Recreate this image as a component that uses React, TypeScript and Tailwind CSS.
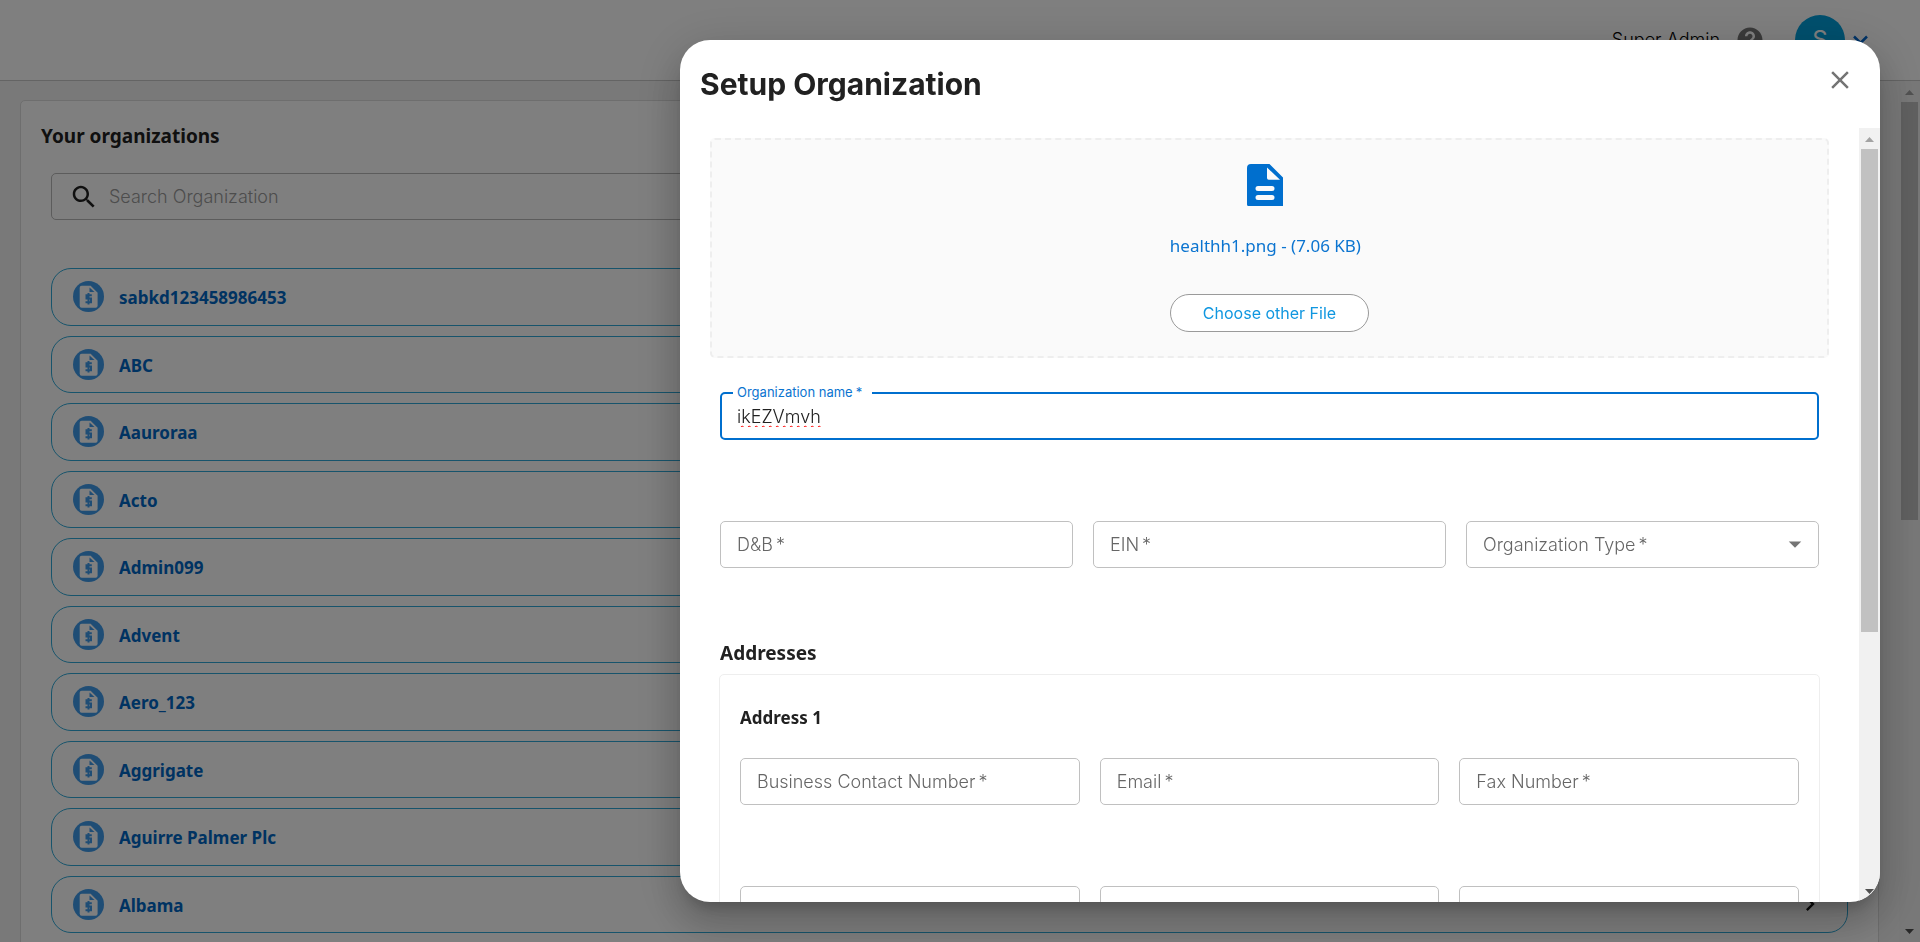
import React from "react";

const organizations = [
  "sabkd123458986453",
  "ABC",
  "Aauroraa",
  "Acto",
  "Admin099",
  "Advent",
  "Aero_123",
  "Aggrigate",
  "Aguirre Palmer Plc",
  "Albama",
];

const heading = "font-['Segoe_UI','Noto_Sans',sans-serif]";

function OrgIcon() {
  return (
    <svg viewBox="0 0 31 31" className="size-[31px] shrink-0" aria-hidden="true">
      <circle cx="15.5" cy="15.5" r="15.5" fill="#3f9bea" />
      <path fill="#fff" d="M8.7 4.800h8.900l7 7v13a2 2 0 0 1-2 2H8.7a2 2 0 0 1-2-2V6.800a2 2 0 0 1 2-2z" />
      <path d="M16.500 6.500v4.500h5z" fill="#3f9bea" />
      <path
        d="M18.800 14.300h-5.300v3.300h4.500v3.600h-5.500M15.500 12v11.500"
        stroke="#3f9bea"
        strokeWidth="2"
        fill="none"
      />
    </svg>
  );
}

function Arrow({ up, dark }: { up?: boolean; dark?: boolean }) {
  return (
    <svg viewBox="0 0 21 21" className="size-[21px] shrink-0" aria-hidden="true">
      <path d={up ? "M6 14h9l-4.500-5z" : "M6 8h9l-4.500 5z"} fill={dark ? "#505050" : "#a3a3a3"} />
    </svg>
  );
}

function Field({ id, label, name }: { id: string; label?: string; name?: string }) {
  return (
    <div className="relative flex-1">
      <input
        id={id}
        aria-label={name}
        placeholder=" "
        className="peer block h-[47px] w-full rounded-[5px] border border-[#c0c0c0] bg-white px-4 text-lg font-light text-[#212121] outline-none"
      />
      {label && (
        <label
          htmlFor={id}
          className="pointer-events-none absolute inset-y-0 left-[17px] flex items-center gap-[3px] text-lg font-light text-[#666] peer-focus:hidden peer-[:not(:placeholder-shown)]:hidden"
        >
          {label}
          <span>*</span>
        </label>
      )}
    </div>
  );
}

export default function App() {
  return (
    <div className="flex h-screen flex-col overflow-hidden bg-white font-['Inter',sans-serif]">
      <header className="flex h-[81px] shrink-0 items-center justify-end border-b border-[#c8c8c8] pr-[52px]">
        <span className="text-lg font-light text-black">Super Admin</span>
        <button type="button" aria-label="Help" className="ml-[15px]">
          <svg viewBox="0 0 24 24" className="size-[30px]" fill="#757575">
            <path d="M12 2C6.480 2 2 6.480 2 12s4.480 10 10 10 10-4.480 10-10S17.520 2 12 2zm1 17h-2v-2h2v2zm2.070-7.750l-.9.920C13.450 12.900 13 13.500 13 15h-2v-.5c0-1.100.450-2.100 1.170-2.830l1.240-1.260c.370-.360.590-.860.590-1.410 0-1.100-.9-2-2-2s-2 .9-2 2H8c0-2.210 1.790-4 4-4s4 1.790 4 4c0 .880-.360 1.680-.930 2.250z" />
          </svg>
        </button>
        <button type="button" aria-label="Account" className="ml-[30px] flex items-center gap-2">
          <span className="flex size-[50px] items-center justify-center rounded-full bg-[#00a0dc] text-2xl text-white">
            S
          </span>
          <svg viewBox="0 0 15 10" className="h-[10px] w-[15px]" fill="none" stroke="#0066cc" strokeWidth="2.500">
            <path d="M1 1.500l6.500 6.500 6.500-6.500" />
          </svg>
        </button>
      </header>

      <div className="flex min-h-0 flex-1 bg-[#f3f3f3]">
        <main className="min-w-0 flex-1 overflow-hidden pt-[19px] pr-5 pl-5">
          <section className="rounded-[5px] border border-[#dcdcdc] bg-white px-5 pt-5 pb-10">
            <h1 className={`${heading} text-[19px] leading-[30px] font-bold text-[#212121]`}>Your organizations</h1>
            <div className="px-[10px]">
              <label className="mt-[22px] flex h-[47px] items-center rounded-[5px] border border-[#b8b8b8] pl-[17px]">
                <svg viewBox="0 0 24 24" className="size-[30px]" fill="#212121">
                  <path d="M15.500 14h-.79l-.28-.27C15.410 12.590 16 11.110 16 9.500 16 5.910 13.090 3 9.500 3S3 5.910 3 9.500 5.910 16 9.500 16c1.610 0 3.090-.59 4.230-1.570l.27.28v.79l5 4.990L20.490 19l-4.990-5zm-6 0C7.010 14 5 11.990 5 9.500S7.010 5 9.500 5 14 7.010 14 9.500 11.990 14 9.500 14z" />
                </svg>
                <input
                  type="search"
                  aria-label="Search Organization"
                  placeholder="Search Organization"
                  className="ml-[10px] min-w-0 flex-1 text-lg font-light outline-none placeholder:text-[#9a9a9a]"
                />
              </label>
              <ul className="mt-12 flex flex-col gap-[10px]">
                {organizations.map((name) => (
                  <li key={name}>
                    <a
                      href="#"
                      className={`${heading} flex items-center rounded-[20px] border border-[#2ea9d8] py-[14px] pr-[23px] pl-[21px] text-[17px] leading-[1.5] font-bold text-[#0066c4]`}
                    >
                      <span className="flex h-6 items-center">
                        <OrgIcon />
                      </span>
                      <span className="ml-[15px] flex-1 pt-0.5">{name}</span>
                      <span className="flex h-6 items-center">
                        <svg viewBox="0 0 24 24" className="size-7" fill="#111">
                          <path d="M10 6L8.590 7.410 13.170 12l-4.580 4.590L10 18l6-6z" />
                        </svg>
                      </span>
                    </a>
                  </li>
                ))}
              </ul>
            </div>
          </section>
        </main>
        <div aria-hidden="true" className="flex w-[21px] flex-col items-center bg-[#f1f1f1]">
          <Arrow up />
          <div className="h-[418px] w-[17px] bg-[#c1c1c1]" />
          <div className="flex-1" />
          <Arrow dark />
        </div>
      </div>

      <div className="fixed inset-0 flex justify-end bg-black/50 p-10">
        <div
          role="dialog"
          aria-modal="true"
          aria-labelledby="dialog-title"
          className="flex h-full w-[1200px] max-w-full flex-col overflow-hidden rounded-[30px] bg-white shadow-[0_11px_15px_-7px_rgba(0,0,0,0.2),0_24px_38px_3px_rgba(0,0,0,0.14),0_9px_46px_8px_rgba(0,0,0,0.12)]"
        >
          <div className="flex h-[88px] shrink-0 items-center justify-between pr-[25px] pl-5">
            <h2 id="dialog-title" className="text-[30px] leading-10 font-bold text-[#212121]">
              Setup Organization
            </h2>
            <button type="button" aria-label="Close" className="mb-2">
              <svg viewBox="0 0 24 24" className="size-[30px]" fill="#757575">
                <path d="M19 6.410L17.590 5 12 10.590 6.410 5 5 6.410 10.590 12 5 17.590 6.410 19 12 13.410 17.590 19 19 17.590 13.410 12z" />
              </svg>
            </button>
          </div>

          <div className="flex min-h-0 flex-1">
            <form className="min-w-0 flex-1 overflow-hidden px-[30px] pt-[10px]">
              <div className="flex h-[220px] justify-center rounded-[5px] border-2 border-dashed border-[#eee] bg-[#fafafa]">
                <div className="flex flex-col items-start pt-[24px]">
                  <div className="flex flex-col items-center">
                    <svg viewBox="0 0 36 42" className="h-[42px] w-9" aria-hidden="true">
                      <path
                        fillRule="evenodd"
                        fill="#006fce"
                        d="M4 0h18.500L36 13.500V42H1.500A1.500 1.500 0 0 1 0 40.500V4a4 4 0 0 1 4-4zM20 3.500v10.500a1.700 1.700 0 0 0 1.700 1.700h11.300zM11 22a2.500 2.500 0 0 0 0 5h14a2.500 2.500 0 0 0 0-5zM11 31a2.500 2.500 0 0 0 0 5h14a2.500 2.500 0 0 0 0-5z"
                      />
                    </svg>
                    <p className={`${heading} mt-[26px] text-[17px] leading-7 font-normal text-[#0b74d0]`}>
                      healthh1.png - (7.06 KB)
                    </p>
                  </div>
                  <button
                    type="button"
                    className="mt-[34px] h-[38px] rounded-full border border-[#9a9a9a] bg-white px-8 text-base text-[#1097e0]"
                  >
                    Choose other File
                  </button>
                </div>
              </div>

              <div className="px-[10px]">
                <div className="relative mt-[34px]">
                  <input
                    id="org-name"
                    defaultValue="ikEZVmvh"
                    spellCheck={false}
                    className="block h-[48px] w-full rounded-[5px] border-2 border-[#006fce] bg-white px-[15px] text-lg leading-8 font-light text-[#212121] underline decoration-[#ff0000] decoration-wavy decoration-1 underline-offset-2 outline-none"
                  />
                  <label
                    htmlFor="org-name"
                    className="absolute -top-2 left-[13px] flex h-[18px] items-center gap-[3px] bg-white pr-[10px] pl-1 text-[13px] text-[#0b74d0]"
                  >
                    Organization name<span>*</span>
                  </label>
                </div>

                <div className="mt-[81px] flex gap-5">
                  <Field id="dnb" label="D&B" />
                  <Field id="ein" label="EIN" />
                  <div className="relative flex-1">
                    <select
                      id="org-type"
                      defaultValue=""
                      className="block h-[47px] w-full appearance-none rounded-[5px] border border-[#c0c0c0] bg-white px-4 text-lg font-light text-[#212121] outline-none"
                    >
                      <option value="" />
                    </select>
                    <label
                      htmlFor="org-type"
                      className="pointer-events-none absolute inset-y-0 left-[17px] flex items-center gap-[3px] text-lg font-light text-[#666]"
                    >
                      Organization Type<span>*</span>
                    </label>
                    <svg
                      viewBox="0 0 24 24"
                      className="pointer-events-none absolute top-2 right-[9px] size-[30px]"
                      fill="#757575"
                      aria-hidden="true"
                    >
                      <path d="M7 10l5 5 5-5z" />
                    </svg>
                  </div>
                </div>

                <h3 className={`${heading} mt-[70px] text-[19px] leading-[30px] font-bold text-[#212121]`}>
                  Addresses
                </h3>
              </div>

              <div className="mx-[9px] mt-[6px] rounded-[5px] border border-[#eee] px-5 pt-[29px] pb-10">
                <h4 className={`${heading} text-[17px] leading-7 font-bold text-[#212121]`}>Address 1</h4>
                <div className="mt-[26px] flex gap-5">
                  <Field id="phone" label="Business Contact Number" />
                  <Field id="email" label="Email" />
                  <Field id="fax" label="Fax Number" />
                </div>
                <div className="mt-[81px] flex gap-5">
                  <Field id="line1" name="Address Line 1" />
                  <Field id="line2" name="Address Line 2" />
                  <Field id="city" name="City" />
                </div>
              </div>
            </form>

            <div aria-hidden="true" className="flex w-[21px] flex-col items-center bg-[#f1f1f1]">
              <Arrow up />
              <div className="h-[483px] w-[17px] bg-[#c1c1c1]" />
              <div className="flex-1" />
              <Arrow dark />
            </div>
          </div>
        </div>
      </div>
    </div>
  );
}
